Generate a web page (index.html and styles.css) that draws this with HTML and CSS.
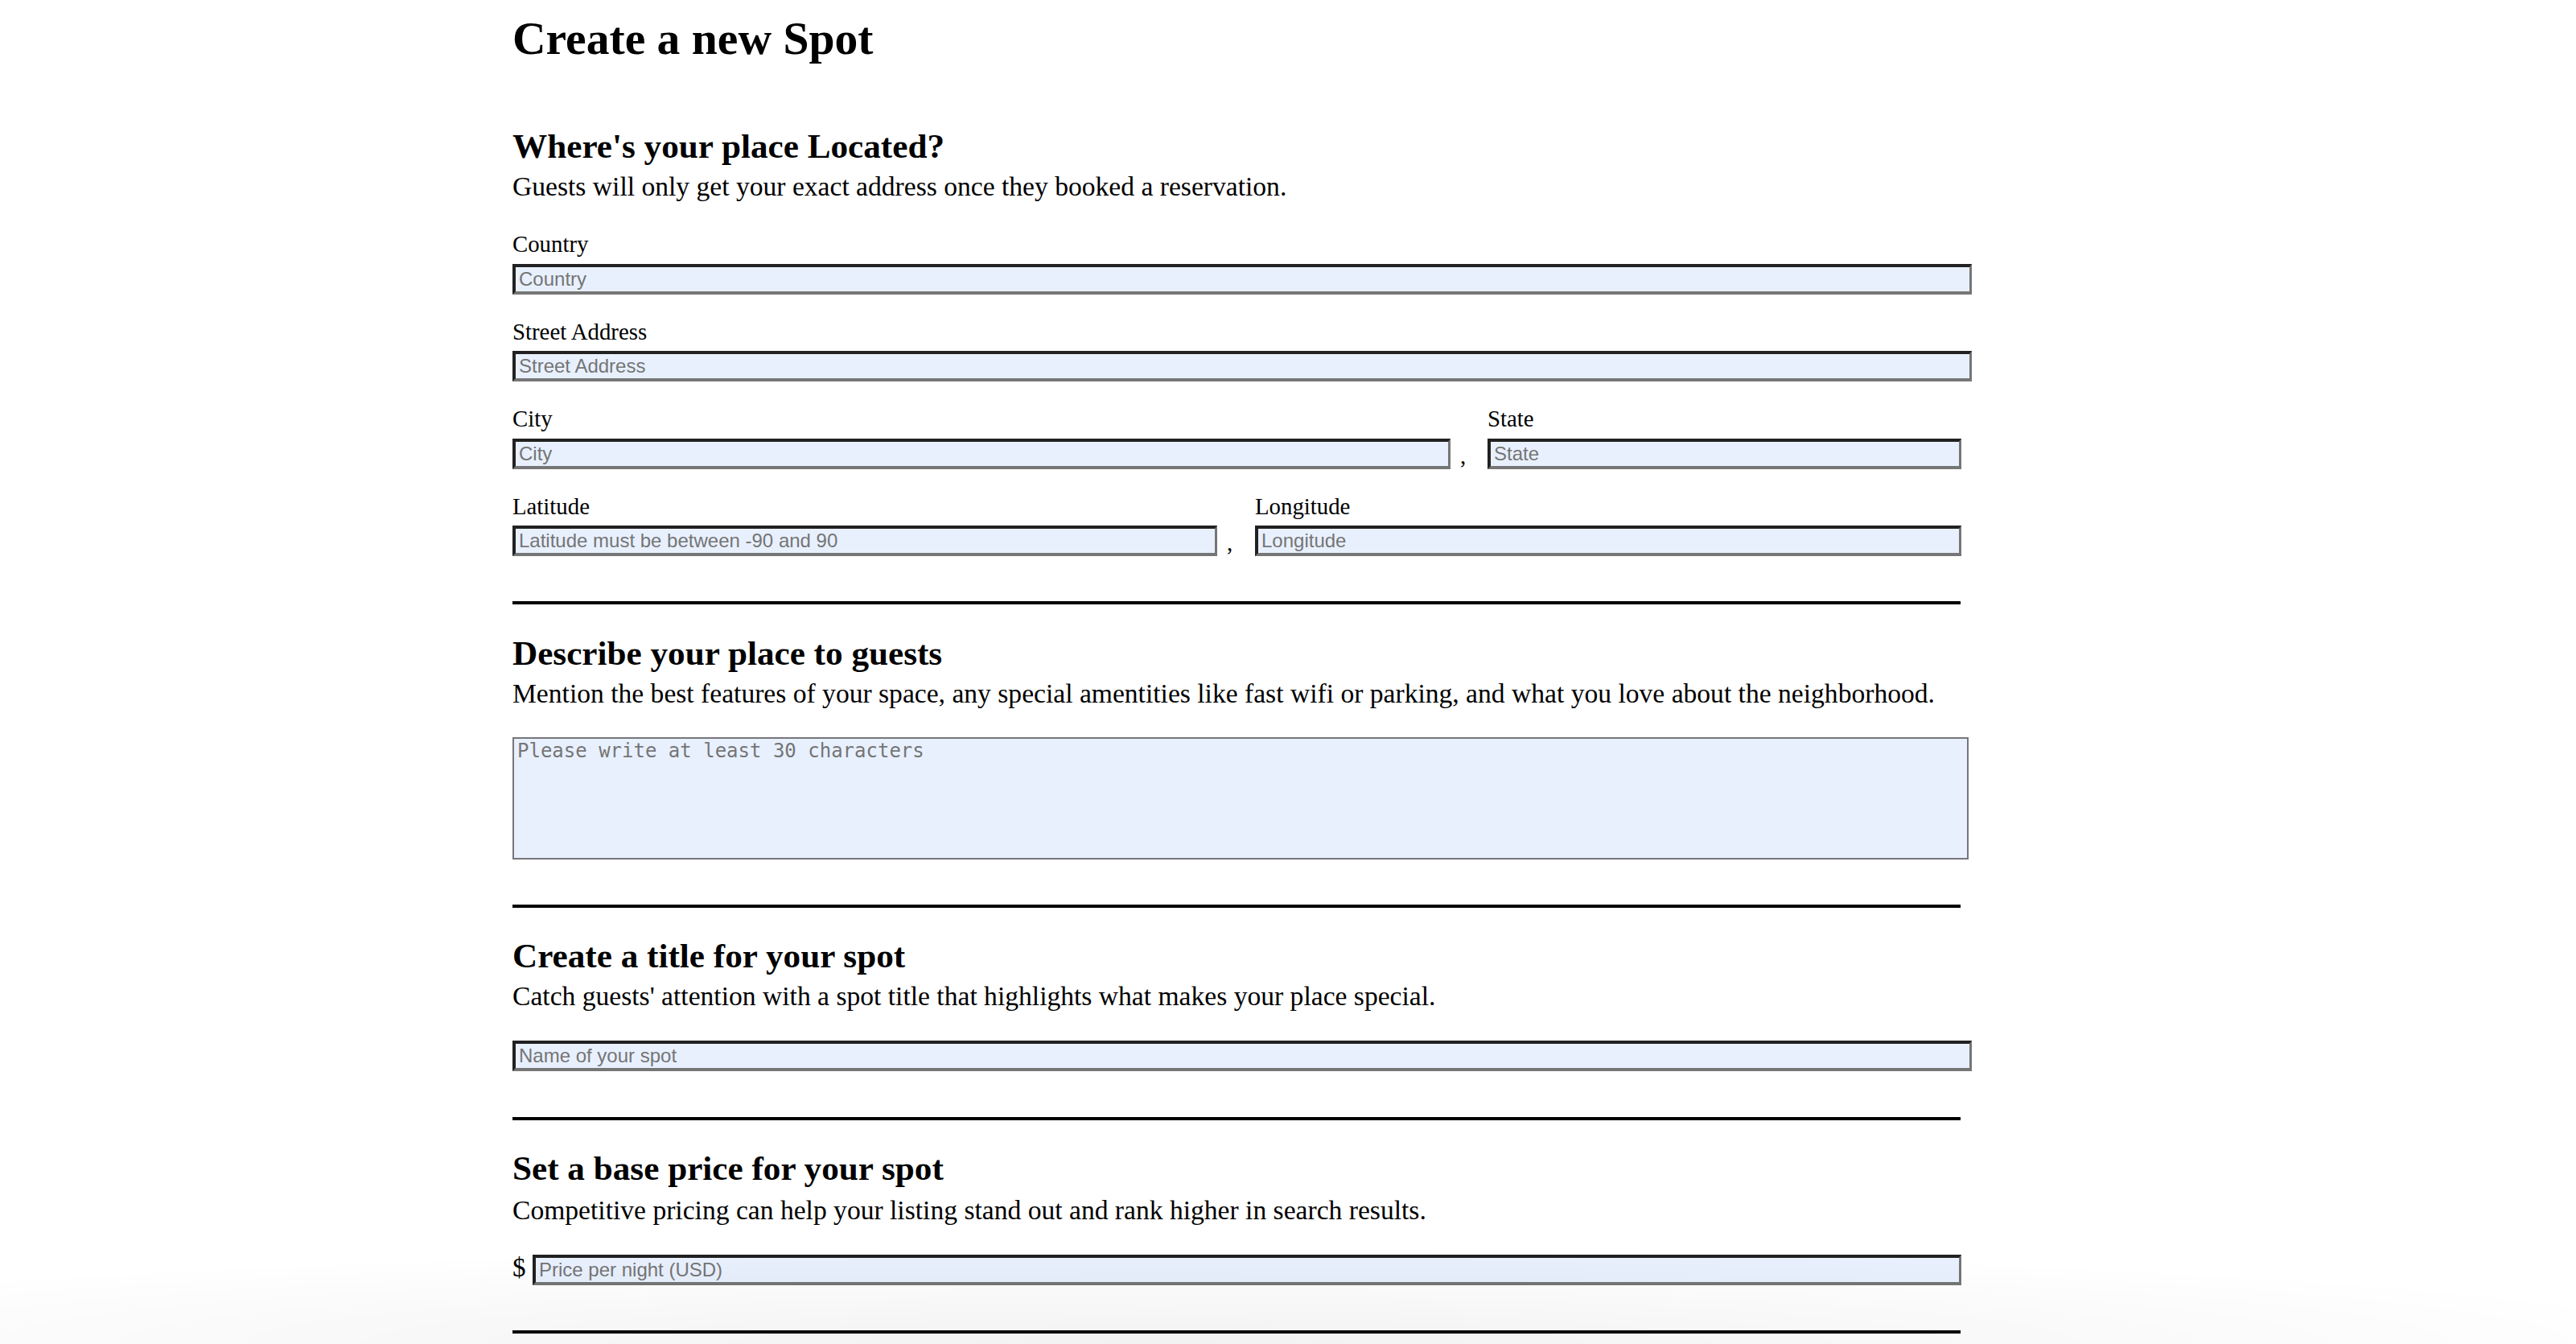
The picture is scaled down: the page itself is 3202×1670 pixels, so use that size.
FILE: index.html
```html
<!DOCTYPE html>
<html lang="en">
<head>
<meta charset="utf-8">
<title>Create a new Spot</title>
<link rel="stylesheet" href="styles.css">
</head>
<body>
<main class="page">
  <h1 class="title">Create a new Spot</h1>
  <form class="spot-form">
    <section class="sec sec-first">
      <h2 class="sec-title">Where's your place Located?</h2>
      <p class="sec-desc">Guests will only get your exact address once they booked a reservation.</p>
      <div class="field field-first">
        <label class="lbl">Country</label>
        <input class="inp inp-full" type="text" placeholder="Country">
      </div>
      <div class="field">
        <label class="lbl">Street Address</label>
        <input class="inp inp-full" type="text" placeholder="Street Address">
      </div>
      <div class="row">
        <div class="col col-city">
          <label class="lbl">City</label>
          <input class="inp" type="text" placeholder="City">
        </div>
        <span class="comma">,</span>
        <div class="col col-state">
          <label class="lbl">State</label>
          <input class="inp" type="text" placeholder="State">
        </div>
      </div>
      <div class="row">
        <div class="col col-lat">
          <label class="lbl">Latitude</label>
          <input class="inp" type="text" placeholder="Latitude must be between -90 and 90">
        </div>
        <span class="comma comma-wide">,</span>
        <div class="col col-lng">
          <label class="lbl">Longitude</label>
          <input class="inp" type="text" placeholder="Longitude">
        </div>
      </div>
    </section>
    <hr class="rule">
    <section class="sec">
      <h2 class="sec-title">Describe your place to guests</h2>
      <p class="sec-desc">Mention the best features of your space, any special amentities like fast wifi or parking, and what you love about the neighborhood.</p>
      <textarea class="txt" placeholder="Please write at least 30 characters"></textarea>
    </section>
    <hr class="rule">
    <section class="sec sec-name">
      <h2 class="sec-title">Create a title for your spot</h2>
      <p class="sec-desc">Catch guests' attention with a spot title that highlights what makes your place special.</p>
      <input class="inp inp-full inp-solo" type="text" placeholder="Name of your spot">
    </section>
    <hr class="rule">
    <section class="sec sec-price">
      <h2 class="sec-title">Set a base price for your spot</h2>
      <p class="sec-desc">Competitive pricing can help your listing stand out and rank higher in search results.</p>
      <div class="price-row">
        <span class="dollar">$</span>
        <input class="inp inp-price" type="text" placeholder="Price per night (USD)">
      </div>
    </section>
    <hr class="rule">
  </form>
</main>
<div class="shade"></div>
</body>
</html>
```

FILE: styles.css
```css
html, body {
  margin: 0;
  padding: 0;
  background: #ffffff;
}

body {
  font-family: "Liberation Serif", "Times New Roman", serif;
  color: #000000;
  overflow: hidden;
}

.page {
  margin-left: 637px;
  width: 1800px;
  padding-top: 15px;
}

.title {
  margin: 0;
  font-size: 57.6px;
  line-height: 66px;
  font-weight: bold;
}

.spot-form {
  margin: 0;
}

.sec {
  padding: 36px 0 56px;
}

.sec-first {
  padding-top: 76px;
}

.sec-name {
  padding-top: 35px;
  padding-bottom: 57px;
}

.sec-price {
  padding-top: 35px;
}

.sec-price .sec-desc {
  margin-top: 8px;
}

.sec-title {
  margin: 0;
  font-size: 43.2px;
  line-height: 50px;
  font-weight: bold;
}

.sec-desc {
  margin: 6px 0 0;
  font-size: 33.6px;
  line-height: 38px;
}

.field {
  margin-top: 30px;
}

.field-first {
  margin-top: 36px;
}

.lbl {
  display: block;
  font-size: 28.8px;
  line-height: 33px;
  margin-bottom: 7.5px;
}

.inp {
  display: block;
  box-sizing: border-box;
  width: 100%;
  height: 38px;
  margin: 0;
  padding: 2px 4px;
  font-family: "Liberation Sans", Arial, sans-serif;
  font-size: 24px;
  color: #000;
  background: #e8f0fe;
  border-style: solid;
  border-width: 4px 3px 4px 4px;
  border-color: #212121 #767676 #767676 #212121;
  border-radius: 0;
  outline: none;
}

.inp::placeholder,
.txt::placeholder {
  color: #757575;
  opacity: 1;
}

.inp-full {
  width: 1814px;
}

.inp-solo {
  margin-top: 36px;
}

.row {
  display: flex;
  align-items: flex-end;
  width: 1801px;
  margin-top: 30px;
}

.col {
  flex: none;
}

.col-city { width: 1166px; }
.col-state { width: 589px; }
.col-lat { width: 876px; }
.col-lng { width: 878px; }

.comma {
  flex: none;
  box-sizing: border-box;
  width: 46px;
  padding-left: 12px;
  font-size: 28.8px;
  line-height: 33px;
}

.comma-wide {
  width: 47px;
}

.txt {
  display: block;
  box-sizing: border-box;
  width: 1810px;
  height: 152px;
  margin: 35px 0 0;
  padding: 1px 4px 4px;
  font-family: "DejaVu Sans Mono", "Liberation Mono", monospace;
  font-size: 24px;
  background: #e8f0fe;
  border: 2px solid #76767b;
  border-radius: 0;
  resize: none;
  outline: none;
}

.price-row {
  display: flex;
  align-items: baseline;
  margin-top: 36px;
  width: 1801px;
}

.dollar {
  flex: none;
  width: 25px;
  font-size: 33px;
  line-height: 33px;
}

.inp-price {
  flex: 1;
  width: auto;
}

.rule {
  margin: 0;
  width: 1800px;
  height: 0;
  border: 0;
  border-top: 4px solid #000000;
}

.shade {
  position: fixed;
  left: 0;
  right: 0;
  bottom: 0;
  height: 120px;
  pointer-events: none;
  background: radial-gradient(ellipse 62% 100% at 45% 100%, rgba(0, 0, 0, 0.05), rgba(0, 0, 0, 0) 100%);
}
```
